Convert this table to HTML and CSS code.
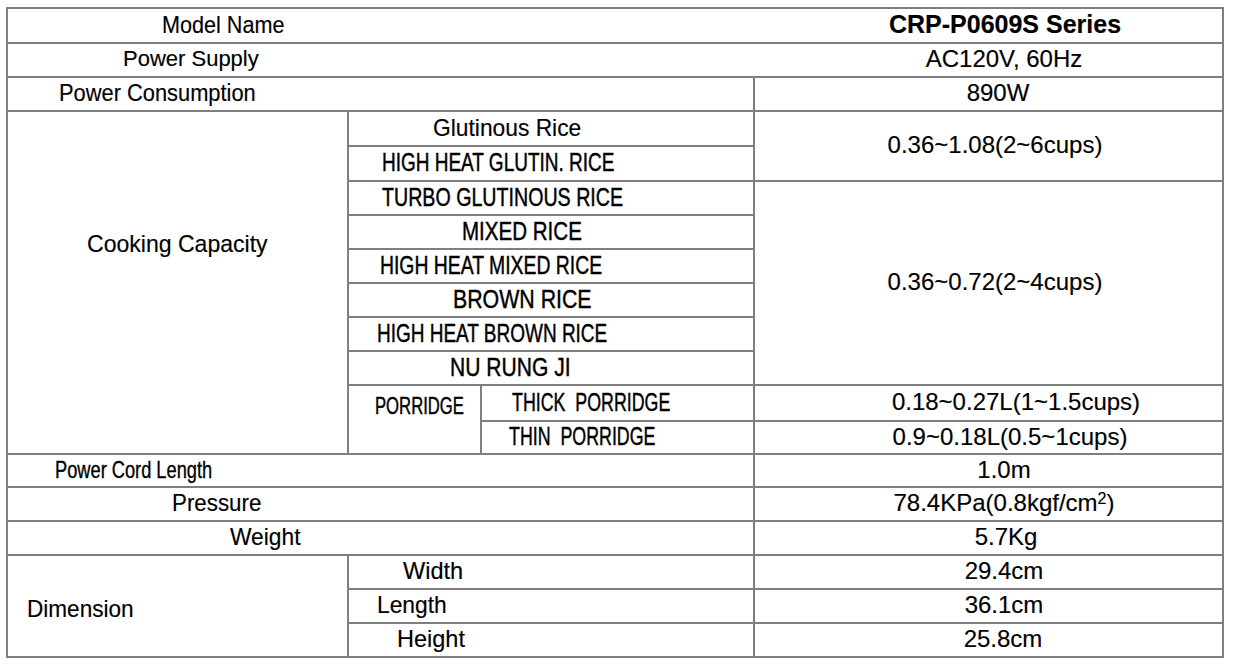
FILE: index.html
```html
<!DOCTYPE html>
<html lang="en">
<head>
<meta charset="utf-8">
<title>CRP-P0609S Series Specifications</title>
<link rel="stylesheet" href="styles.css">
</head>
<body>
<div class="spec">
  <div class="split">
    <div class="c l pl-154"><span class="t mx s90">Model Name</span></div>
    <div class="c v pl-33"><span class="t model">CRP-P0609S Series</span></div>
  </div>
  <div class="split">
    <div class="c l pl-115"><span class="t ps">Power Supply</span></div>
    <div class="c v pl-31"><span class="t">AC120V, 60Hz</span></div>
  </div>

  <div class="c l ac pl-51"><span class="t pc s95">Power Consumption</span></div>
  <div class="c v d pl-19"><span class="t">890W</span></div>

  <div class="c l a cook"><span class="t mx s96">Cooking Capacity</span></div>
  <div class="c l bc pl-84"><span class="t mx s95">Glutinous Rice</span></div>
  <div class="c v d r2 pl-13"><span class="t">0.36~1.08(2~6cups)</span></div>
  <div class="c l bc pl-33"><span class="t cp s73">HIGH HEAT GLUTIN. RICE</span></div>
  <div class="c l bc pl-33"><span class="t cp s755">TURBO GLUTINOUS RICE</span></div>
  <div class="c v d r6 pl-13"><span class="t">0.36~0.72(2~4cups)</span></div>
  <div class="c l bc pl-113"><span class="t cp s79">MIXED RICE</span></div>
  <div class="c l bc pl-31"><span class="t cp s745">HIGH HEAT MIXED RICE</span></div>
  <div class="c l bc pl-104"><span class="t cp s82">BROWN RICE</span></div>
  <div class="c l bc pl-28"><span class="t cp s73">HIGH HEAT BROWN RICE</span></div>
  <div class="c l bc pl-101"><span class="t cp s81">NU RUNG JI</span></div>
  <div class="c l b r2 porridge"><span class="t pr s725">PORRIDGE</span></div>
  <div class="c l cc pl-30"><span class="t cp s685 pre">THICK  PORRIDGE</span></div>
  <div class="c v d pl-55"><span class="t">0.18~0.27L(1~1.5cups)</span></div>
  <div class="c l cc pl-27"><span class="t cp s685 pre">THIN  PORRIDGE</span></div>
  <div class="c v d pl-43"><span class="t">0.9~0.18L(0.5~1cups)</span></div>

  <div class="c l ac pl-47"><span class="t cord s76">Power Cord Length</span></div>
  <div class="c v d pl-31"><span class="t">1.0m</span></div>
  <div class="c l ac pl-164"><span class="t mx s93">Pressure</span></div>
  <div class="c v d pl-31"><span class="t">78.4KPa(0.8kgf/cm<sup class="sq">2</sup>)</span></div>
  <div class="c l ac pl-222"><span class="t mx s95">Weight</span></div>
  <div class="c v d pl-35"><span class="t">5.7Kg</span></div>

  <div class="c l a r3 dim"><span class="t mx s94">Dimension</span></div>
  <div class="c l bc pl-54"><span class="t mx s98">Width</span></div>
  <div class="c v d pl-31"><span class="t">29.4cm</span></div>
  <div class="c l bc pl-28"><span class="t mx s95">Length</span></div>
  <div class="c v d pl-31"><span class="t">36.1cm</span></div>
  <div class="c l bc pl-48"><span class="t mx s98">Height</span></div>
  <div class="c v d pl-29"><span class="t">25.8cm</span></div>
</div>
</body>
</html>
```
FILE: styles.css
```css
html, body {
  margin: 0;
  padding: 0;
  background: #ffffff;
}

body {
  font-family: "Liberation Sans", Arial, sans-serif;
  color: #000000;
}

.spec {
  display: grid;
  grid-template-columns: 339px 131px 271px 467px;
  grid-template-rows: 33px 32px 32px 33px 33px 32px 32px 32px 32px 32px 32px 34px 31px 31px 32px 32px 32px 32px 32px;
  gap: 2px;
  padding: 2px;
  width: max-content;
  margin: 7px 0 0 6px;
  background: #7f7f7f;
}

.split {
  grid-column: 1 / -1;
  display: grid;
  grid-template-columns: 747px 467px;
  background: #ffffff;
}

.c {
  background: #ffffff;
  display: flex;
  align-items: center;
  justify-content: center;
  white-space: nowrap;
  min-width: 0;
  padding-bottom: 2px;
  box-sizing: border-box;
}

.l { justify-content: flex-start; }

/* column placement */
.a  { grid-column: 1 / 2; }
.b  { grid-column: 2 / 3; }
.cc { grid-column: 3 / 4; }
.bc { grid-column: 2 / 4; }
.ac { grid-column: 1 / 4; }
.d  { grid-column: 4 / 5; }

.r2 { grid-row: span 2; }
.r3 { grid-row: span 3; }
.r6 { grid-row: span 6; }

.cook { grid-row: span 10; align-items: flex-start; padding: 118px 0 0 79px; }
.porridge { align-items: flex-start; padding: 7px 0 0 26px; }
.dim { padding: 6px 0 0 19px; }

/* text */
.t {
  display: inline-block;
  transform-origin: left center;
  line-height: normal;
  -webkit-text-stroke: 0.15px #000;
}

.v .t { font-size: 24px; }
.model { font-weight: bold; font-size: 25px !important; }

.mx   { font-size: 24px; }
.ps   { font-size: 22px; }
.pc   { font-size: 23px; }
.cp   { font-size: 26px; -webkit-text-stroke: 0.45px #000; }
.pr   { font-size: 23px; -webkit-text-stroke: 0.45px #000; }
.cord { font-size: 24px; -webkit-text-stroke: 0.35px #000; }
.pre  { white-space: pre; }

.sq {
  font-size: 16px;
  line-height: 0;
  vertical-align: 7px;
}

/* horizontal compression of the scanned condensed type */
.s685 { transform: scaleX(0.685); }
.s725 { transform: scaleX(0.725); }
.s73  { transform: scaleX(0.73); }
.s745 { transform: scaleX(0.745); }
.s755 { transform: scaleX(0.755); }
.s76  { transform: scaleX(0.76); }
.s79  { transform: scaleX(0.79); }
.s81  { transform: scaleX(0.81); }
.s82  { transform: scaleX(0.82); }
.s90  { transform: scaleX(0.90); }
.s93  { transform: scaleX(0.93); }
.s94  { transform: scaleX(0.94); }
.s95  { transform: scaleX(0.95); }
.s96  { transform: scaleX(0.96); }
.s98  { transform: scaleX(0.98); }

/* text offsets inside cells */
.pl-13  { padding-left: 13px; }
.pl-19  { padding-left: 19px; }
.pl-27  { padding-left: 27px; }
.pl-28  { padding-left: 28px; }
.pl-29  { padding-left: 29px; }
.pl-30  { padding-left: 30px; }
.pl-31  { padding-left: 31px; }
.pl-33  { padding-left: 33px; }
.pl-35  { padding-left: 35px; }
.pl-43  { padding-left: 43px; }
.pl-47  { padding-left: 47px; }
.pl-48  { padding-left: 48px; }
.pl-51  { padding-left: 51px; }
.pl-54  { padding-left: 54px; }
.pl-55  { padding-left: 55px; }
.pl-84  { padding-left: 84px; }
.pl-101 { padding-left: 101px; }
.pl-104 { padding-left: 104px; }
.pl-113 { padding-left: 113px; }
.pl-115 { padding-left: 115px; }
.pl-154 { padding-left: 154px; }
.pl-164 { padding-left: 164px; }
.pl-222 { padding-left: 222px; }
```
